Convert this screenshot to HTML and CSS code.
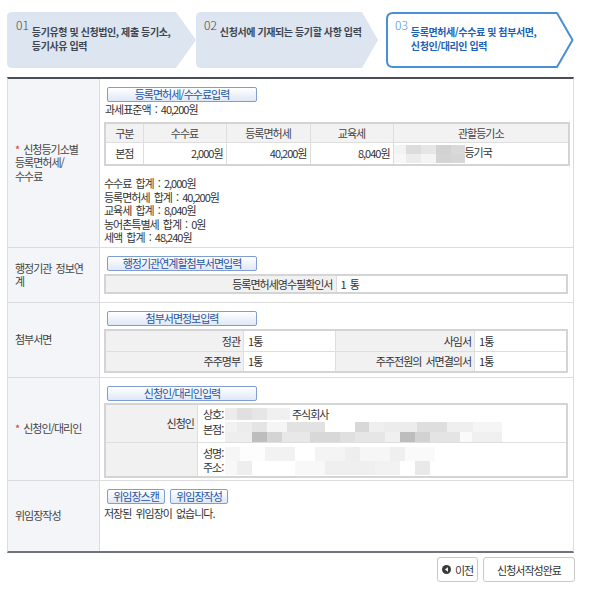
FILE: index.html
```html
<!DOCTYPE html>
<html lang="ko">
<head>
<meta charset="utf-8">
<title>등록면허세/수수료 및 첨부서면 입력</title>
<link rel="stylesheet" href="styles.css">
</head>
<body>
<div class="page">
  <div class="steps">
    <div class="step step-1">
      <svg class="step-shape" viewBox="0 0 189 56" preserveAspectRatio="none"><path d="M5 0 H169 L189 28 L169 56 H5 Q0 56 0 51 V5 Q0 0 5 0 Z" fill="#dde6f0"/></svg>
      <span class="step-num">01</span>
      <span class="step-txt">등기유형 및 신청법인, 제출 등기소,<br>등기사유 입력</span>
    </div>
    <div class="step step-2">
      <svg class="step-shape" viewBox="0 0 182 56" preserveAspectRatio="none"><path d="M5 0 H166 L182 28 L166 56 H5 Q0 56 0 51 V5 Q0 0 5 0 Z" fill="#dde6f0"/></svg>
      <span class="step-num">02</span>
      <span class="step-txt">신청서에 기재되는 등기할 사항 입력</span>
    </div>
    <div class="step step-3">
      <svg class="step-shape" viewBox="0 0 188 56" preserveAspectRatio="none"><path d="M7 1 H171 L186.5 28 L171 55 H7 Q1 55 1 49 V7 Q1 1 7 1 Z" fill="#fff" stroke="#4a8ed3" stroke-width="2" stroke-linejoin="round"/></svg>
      <span class="step-num">03</span>
      <span class="step-txt">등록면허세/수수료 및 첨부서면,<br>신청인/대리인 입력</span>
    </div>
  </div>

  <div class="form">
    <div class="row r1">
      <div class="lbl"><span><span class="req">*</span> 신청등기소별<br>등록면허세/<br>수수료</span></div>
      <div class="val">
        <button class="btn btn-wide">등록면허세/수수료입력</button>
        <div class="base">과세표준액 : 40,200원</div>
        <table class="fee">
          <colgroup><col class="c1"><col class="c2"><col class="c3"><col class="c4"><col class="c5"></colgroup>
          <thead>
            <tr><th>구분</th><th>수수료</th><th>등록면허세</th><th>교육세</th><th>관할등기소</th></tr>
          </thead>
          <tbody>
            <tr><td class="ctr">본점</td><td class="num">2,000원</td><td class="num">40,200원</td><td class="num">8,040원</td><td class="office"><span class="blur blur-a"></span>등기국</td></tr>
          </tbody>
        </table>
        <div class="sums">
          <div>수수료 합계 : 2,000원</div>
          <div>등록면허세 합계 : 40,200원</div>
          <div>교육세 합계 : 8,040원</div>
          <div>농어촌특별세 합계 : 0원</div>
          <div>세액 합계 : 48,240원</div>
        </div>
      </div>
    </div>

    <div class="row r2">
      <div class="lbl"><span>행정기관 정보연<br>계</span></div>
      <div class="val">
        <button class="btn btn-wide">행정기관연계할첨부서면입력</button>
        <table class="info">
          <colgroup><col class="w50"><col class="w50"></colgroup>
          <tr><th>등록면허세영수필확인서</th><td>1 통</td></tr>
        </table>
      </div>
    </div>

    <div class="row r3">
      <div class="lbl"><span>첨부서면</span></div>
      <div class="val">
        <button class="btn btn-wide">첨부서면정보입력</button>
        <table class="info info-4">
          <colgroup><col class="w30"><col class="w20"><col class="w30"><col class="w20"></colgroup>
          <tr><th>정관</th><td>1통</td><th>사임서</th><td>1통</td></tr>
          <tr><th>주주명부</th><td>1통</td><th>주주전원의 서면결의서</th><td>1통</td></tr>
        </table>
      </div>
    </div>

    <div class="row r4">
      <div class="lbl"><span><span class="req">*</span> 신청인/대리인</span></div>
      <div class="val">
        <button class="btn btn-wide">신청인/대리인입력</button>
        <table class="info info-party">
          <colgroup><col class="w20"><col class="w80"></colgroup>
          <tr>
            <th>신청인</th>
            <td>
              <div class="party">
                <span class="party-k">상호:</span><span class="party-v"><span class="blur blur-b"></span>주식회사</span>
                <span class="party-k">본점:</span><span class="party-v"><span class="blur blur-c"></span></span>
              </div>
            </td>
          </tr>
          <tr>
            <th></th>
            <td>
              <div class="party party-2">
                <span class="party-k">성명:</span><span class="party-v party-span"><span class="blur blur-d"></span></span>
                <span class="party-k">주소:</span>
              </div>
            </td>
          </tr>
        </table>
      </div>
    </div>

    <div class="row r5">
      <div class="lbl"><span>위임장작성</span></div>
      <div class="val">
        <div class="btn-row">
          <button class="btn btn-small">위임장스캔</button>
          <button class="btn btn-small">위임장작성</button>
        </div>
        <div class="note">저장된 위임장이 없습니다.</div>
      </div>
    </div>
  </div>

  <div class="actions">
    <button class="act act-prev"><svg class="prev-ico" viewBox="0 0 10 10"><circle cx="5" cy="5" r="5" fill="#3a3a3a"/><path d="M6.6 2.6 L3.2 5 L6.6 7.4 Z" fill="#fff"/></svg>이전</button>
    <button class="act act-done">신청서작성완료</button>
  </div>
</div>
</body>
</html>
```

FILE: styles.css
```css
* { box-sizing: border-box; }

body {
  margin: 0;
  background: #fff;
  color: #333;
  font-family: "Noto Sans CJK KR", "Noto Sans", sans-serif;
  font-size: 11px;
  letter-spacing: -1px;
  word-spacing: 2px;
}

.page {
  width: 594px;
  padding: 12px 20px 0 7px;
}

/* ---------- steps ---------- */
.steps {
  display: flex;
  height: 56px;
}
.step {
  position: relative;
  display: flex;
  align-items: flex-start;
  height: 56px;
  padding-top: 7px;
}
.step-1 { width: 189px; padding-left: 9px; }
.step-2 { width: 182px; padding-left: 8px; }
.step-3 { width: 188px; margin-left: 8px; padding-left: 9px; }

.step-shape {
  position: absolute;
  left: 0;
  top: 0;
  width: 100%;
  height: 100%;
}
.step-num,
.step-txt { position: relative; }

.step-num {
  font-size: 12px;
  line-height: 12px;
  font-weight: 300;
  color: #3f444d;
  letter-spacing: 0;
  margin-right: 3px;
}
.step-txt {
  margin-top: 6px;
  font-size: 10px;
  line-height: 13.5px;
  font-weight: 700;
  color: #3e4552;
  letter-spacing: -0.4px;
  word-spacing: 0;
  white-space: nowrap;
}
.step-3 .step-num { color: #4d8ad0; }
.step-3 .step-txt { color: #1b5fb8; }

/* ---------- form ---------- */
.form {
  margin-top: 9px;
  border-top: 2px solid #4b4d59;
  border-bottom: 2px solid #70727c;
  border-left: 1px solid #dcdcdc;
  border-right: 1px solid #dcdcdc;
}
.row {
  display: grid;
  grid-template-columns: 92px 1fr;
  border-bottom: 1px solid #dcdcdc;
}
.row:last-child { border-bottom: 0; }
.r1 { height: 169px; }
.r2 { height: 55px; }
.r3 { height: 75px; }
.r4 { height: 103px; }
.r5 { height: 70px; }

.lbl {
  display: flex;
  align-items: center;
  padding-left: 7px;
  background: #f4f5f8;
  border-right: 1px solid #dcdcdc;
  color: #444;
  line-height: 13.5px;
}
.req { color: #e03434; }

.val {
  padding: 8px 5px 0 4px;
}

.btn {
  display: block;
  height: 15px;
  margin-left: 3px;
  padding: 0;
  border: 1px solid #7f9dd0;
  border-radius: 2px;
  background: linear-gradient(#ffffff, #dfe8f6);
  color: #2452a4;
  font: inherit;
  font-size: 11px;
  line-height: 13px;
  letter-spacing: -1px;
  text-align: center;
}
.btn-wide { width: 150px; }
.btn-small { width: 58px; margin-left: 0; }
.btn-row {
  display: flex;
  gap: 5px;
  margin-left: 3px;
}

.base {
  line-height: 14px;
  margin-left: 1px;
}

/* tables */
table {
  width: 464px;
  border-collapse: collapse;
  table-layout: fixed;
  border: 2px solid #d4d4d4;
}
th, td {
  border: 1px solid #dedede;
  padding: 0;
  font-weight: 400;
  color: #333;
}

.fee { margin-top: 6px; }
.fee .c1 { width: 38px; }
.fee .c2 { width: 83px; }
.fee .c3 { width: 84px; }
.fee .c4 { width: 83px; }
.fee .c5 { width: 176px; }
.fee th {
  height: 19px;
  background: #f2f2f2;
  text-align: center;
  color: #444;
}
.fee td { height: 23px; }
.fee .ctr { text-align: center; }
.fee .num { text-align: right; padding-right: 3px; }
.fee .office { text-align: left; }

.sums {
  margin-top: 11px;
  line-height: 13.5px;
}

.blur {
  display: inline-block;
  vertical-align: middle;
}
.blur-a {
  width: 71px;
  height: 18px;
  background:
    linear-gradient(90deg, #f3f3f3 0 12px, #dcdcdc 12px 27px, #e6e6e6 27px 42px, #d2d2d2 42px 57px, #d9d9d9 57px) top / 100% 50% no-repeat,
    linear-gradient(90deg, #f7f7f7 0 12px, #ececec 12px 27px, #f4f4f4 27px 42px, #d4d4d4 42px 57px, #d6d6d6 57px) bottom / 100% 50% no-repeat;
}
.blur-b {
  width: 65px;
  height: 12px;
  margin-right: 2px;
  background:
    linear-gradient(90deg, #ececec 0 12px, #e0e0e0 12px 27px, #e6e6e6 27px 42px, #f0f0f0 42px) top / 100% 100% no-repeat;
}
.blur-c {
  width: 277px;
  height: 20px;
  background:
    linear-gradient(90deg, #f2f2f2 0 12px, #ececec 12px 27px, #e4e4e4 27px 42px, #f5f5f5 42px 62px, #e2e2e2 62px 100px, #fff 100px 130px, #d8d8d8 130px 144px, #efefef 144px 159px, #ececec 159px 192px, #dedede 192px 222px, #efefef 222px 248px, #f5f5f5 248px) top / 100% 50% no-repeat,
    linear-gradient(90deg, #eeeeee 0 27px, #bdbdbd 27px 42px, #d4d4d4 42px 57px, #e8e8e8 57px 85px, #d8d8d8 85px 115px, #e0e0e0 115px 130px, #e6e6e6 130px 160px, #f0f0f0 160px 175px, #bdbdbd 175px 190px, #d2d2d2 190px 205px, #e4e4e4 205px 235px, #fafafa 235px 247px, #f0f0f0 247px) bottom / 100% 50% no-repeat;
}
.blur-d {
  width: 264px;
  height: 28px;
  background:
    linear-gradient(90deg, #f6f6f6 0 15px, #fdfdfd 15px 40px, #f2f2f2 40px 70px, #fff 70px 90px, #f4f4f4 90px 120px, #eeeeee 120px 135px, #f6f6f6 135px 165px, #efefef 165px 180px, #fafafa 180px 210px, #fff 210px) top / 100% 50% no-repeat,
    linear-gradient(90deg, #f8f8f8 0 12px, #eeeeee 12px 27px, #fff 27px 70px, #f8f8f8 70px 100px, #efefef 100px 150px, #f2f2f2 150px 175px, #fff 175px 190px, #e9e9e9 190px 205px, #fff 205px) bottom / 100% 50% no-repeat;
}

.info { margin-top: 3px; }
.info .w50 { width: 50%; }
.info .w30 { width: 30%; }
.info .w20 { width: 20%; }
.info .w80 { width: 80%; }
.info th {
  background: #f1f1f1;
  text-align: right;
  padding-right: 3px;
  height: 18px;
}
.info td {
  padding-left: 4px;
  height: 18px;
}
.info-4 th,
.info-4 td { height: 21px; }

.info-party { margin-top: 2px; }
.info-party th { height: 35px; vertical-align: middle; }
.info-party td { padding-left: 5px; vertical-align: top; }

.party {
  display: grid;
  grid-template-columns: 22px 1fr;
  line-height: 14.5px;
  padding-top: 2px;
}
.party-v {
  display: flex;
  align-items: center;
  white-space: nowrap;
}
.party-2 {
  line-height: 12px;
  padding-top: 4px;
}
.party-span { grid-row: span 2; align-items: flex-start; }

.note {
  margin-top: 2px;
  line-height: 14px;
}

/* ---------- actions ---------- */
.actions {
  display: flex;
  justify-content: flex-end;
  gap: 5px;
  margin-top: 4px;
  margin-right: -1px;
}
.act {
  display: flex;
  align-items: center;
  justify-content: center;
  height: 25px;
  padding: 0;
  border: 1px solid #c9c9c9;
  border-radius: 3px;
  background: #fff;
  color: #333;
  font: inherit;
  font-size: 11px;
  letter-spacing: -1px;
}
.act-prev { width: 41px; gap: 4px; }
.act-done { width: 92px; }
.prev-ico { width: 9px; height: 9px; }
```
